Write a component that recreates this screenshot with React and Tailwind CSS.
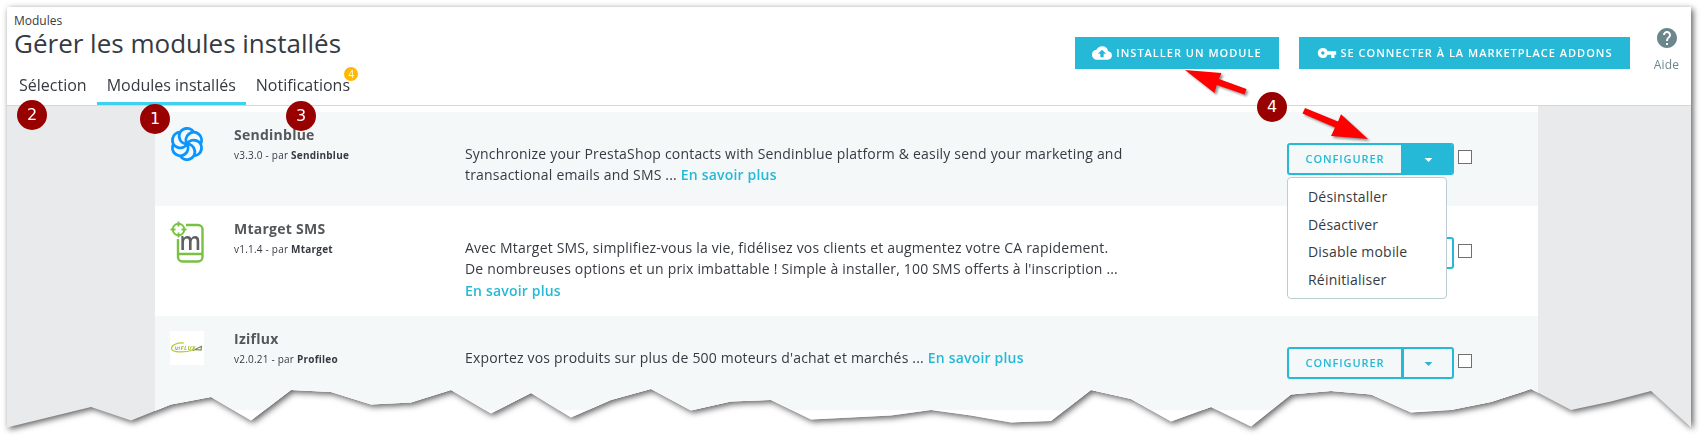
import { useState } from "react";
import { MdArrowDropDown, MdCloudUpload, MdHelp, MdVpnKey } from "react-icons/md";

const tabs = [
  { id: "selection", label: "Sélection" },
  { id: "installed", label: "Modules installés" },
  { id: "notifications", label: "Notifications", count: 4 },
];

const actions = ["Désinstaller", "Désactiver", "Disable mobile", "Réinitialiser"];

// torn bottom edge, from right to left
const tear = [
  [1684, 421], [1644, 384.5], [1604, 395], [1564, 403.5], [1524, 382.5], [1484, 395.5], [1444, 403.5],
  [1404, 406], [1364, 388], [1324, 384.5], [1284, 388], [1244, 420], [1204, 400.5], [1164, 415],
  [1124, 392.5], [1084, 383.5], [1044, 414.5], [1004, 416], [964, 409], [924, 403.5], [884, 409],
  [804, 413], [764, 393.5], [724, 395], [684, 404], [644, 382.5], [604, 393.5], [564, 411],
  [524, 386.5], [484, 407], [444, 383.5], [404, 396], [364, 398], [324, 385.5], [284, 383.5],
  [244, 414], [204, 390.5], [164, 398], [124, 414], [84, 400.5], [0, 421],
];

const paperShape = `polygon(0 0, 1684px 0, ${tear.map(([x, y]) => `${x}px ${y - 0.5}px`).join(", ")})`;

function SendinblueLogo() {
  return (
    <svg width="34" height="34" viewBox="-17 -17 34 34" fill="none" stroke="#0b96ff" strokeWidth="2.9">
      {[0, 60, 120, 180, 240, 300].map((angle) => (
        <path key={angle} transform={`rotate(${angle})`} d="M6.75 -11.7A7.8 7.8 0 1 0 0 0" />
      ))}
    </svg>
  );
}

function MtargetLogo() {
  return (
    <svg width="34" height="42" viewBox="0 0 34 42" fill="none" stroke="#7ac143" strokeWidth="2.4">
      <path d="M16 4h12a4.500 4.500 0 0 1 4.500 4.500v27.500a4.500 4.500 0 0 1-4.500 4.500H12.500a4.500 4.500 0 0 1-4.500-4.500V18M8 33h24.500" />
      <circle cx="8.500" cy="8.500" r="5.800" strokeWidth="1.900" />
      <path d="M8.500 .5v5M8.500 11.500v5M.5 8.500h5M11.500 8.500h5" strokeWidth="1.900" />
      <text x="9.500" y="29" textLength="21.500" lengthAdjust="spacingAndGlyphs" fill="#5d6062" stroke="none" className="font-['Open_Sans',sans-serif] text-[26px] font-semibold">
        m
      </text>
    </svg>
  );
}

function IzifluxLogo() {
  return (
    <svg width="34" height="34" viewBox="0 0 34 34" fill="none" className="bg-white">
      <path d="M14 12C7 11.500 1.500 14 1.500 17.500c0 4.500 14 4 22 1.500" stroke="#b5c92f" strokeWidth="1.200" />
      <path d="M23 19.500l9-4.500M25 18.500l6 .5 .5-3.500" stroke="#7d8750" strokeWidth="1.200" />
      <text x="4.500" y="18.500" textLength="5.500" lengthAdjust="spacingAndGlyphs" fill="#666" className="font-['Open_Sans',sans-serif] text-[6px] italic">izi</text>
      <text x="10.500" y="18.500" textLength="15" fill="#a9bf2c" className="font-['Open_Sans',sans-serif] text-[6px] font-bold italic">FLUX</text>
    </svg>
  );
}

const modules = [
  {
    name: "Sendinblue",
    version: "v3.3.0",
    author: "Sendinblue",
    logo: <SendinblueLogo />,
    lines: ["Synchronize your PrestaShop contacts with Sendinblue platform & easily send your marketing and", "transactional emails and SMS ... "],
    row: "h-[94px] bg-[#f4f8f9]",
  },
  {
    name: "Mtarget SMS",
    version: "v1.1.4",
    author: "Mtarget",
    logo: <MtargetLogo />,
    lines: [
      "Avec Mtarget SMS, simplifiez-vous la vie, fidélisez vos clients et augmentez votre CA rapidement.",
      "De nombreuses options et un prix imbattable ! Simple à installer, 100 SMS offerts à l'inscription ...",
      "",
    ],
    row: "h-[110px] bg-white",
  },
  {
    name: "Iziflux",
    version: "v2.0.21",
    author: "Profileo",
    logo: <IzifluxLogo />,
    lines: ["Exportez vos produits sur plus de 500 moteurs d'achat et marchés ... "],
    row: "h-[94px] bg-[#f4f8f9]",
  },
];

function ConfigureButton({ open, covered, onToggle }) {
  return (
    <div className="relative w-[167px]">
      <div className="flex h-8 overflow-hidden rounded-[3px] border-2 border-[#25b9d7] text-[#25b9d7]">
        <button className="w-[112px] text-[11px] font-semibold tracking-[0.9px]">{!covered && "CONFIGURER"}</button>
        <button
          onClick={onToggle}
          className={`flex flex-1 items-center justify-center border-l-[3px] border-[#25b9d7] ${open ? "bg-[#25b9d7] text-white" : ""}`}
        >
          <MdArrowDropDown className="size-[19px]" />
        </button>
      </div>
      {open && (
        <ul className="absolute top-[34px] left-0 z-10 h-[122px] w-40 rounded-[4px] border border-[#bbcdd2] bg-white pt-[5px] pl-5">
          {actions.map((action) => (
            <li key={action} className="h-[27.600px] text-[14px] leading-[27.600px] tracking-[0.200px]">
              {action}
            </li>
          ))}
        </ul>
      )}
    </div>
  );
}

function ModuleRow({ module, open, covered, onToggle }) {
  return (
    <div className={`flex items-start ${module.row}`}>
      <div className="w-[79px] pt-[15px] pl-[15px]">{module.logo}</div>
      <div className="w-[231px] pt-3">
        <h3 className="text-[14px] leading-[21px] font-bold tracking-[0.250px] text-[#54585b]">{module.name}</h3>
        <p className="mt-[2px] text-[10px] leading-4 tracking-[0.220px]">
          {module.version} - par <b>{module.author}</b>
        </p>
      </div>
      <div className="w-[822px] pt-[31px] text-[14px] leading-[21.300px] tracking-[0.190px] whitespace-pre">
        {module.lines.map((line, i) => (
          <p key={i}>
            {line}
            {i === module.lines.length - 1 && <a className="font-semibold text-[#25b9d7]">En savoir plus</a>}
          </p>
        ))}
      </div>
      <div className="flex items-start pt-[31px]">
        <ConfigureButton open={open} covered={covered} onToggle={onToggle} />
        <span className="mt-[7px] ml-1 size-[14px] border border-[#707070] bg-white" />
      </div>
    </div>
  );
}

function Marker({ children, className }) {
  return (
    <span
      className={`absolute flex size-[30px] items-center justify-center rounded-full bg-[#990000] pb-px font-['DejaVu_Sans',sans-serif] text-[16px] text-white ${className}`}
    >
      {children}
    </span>
  );
}

export default function App() {
  const [activeTab, setActiveTab] = useState("installed");
  const [openMenu, setOpenMenu] = useState("Sendinblue");

  return (
    <div className="relative h-[439px] w-[1702px] overflow-hidden bg-white font-['Open_Sans',sans-serif] text-[#363a41]">
      <div className="pt-[7px] pl-[7px] drop-shadow-[2px_2px_3px_rgba(0,0,0,0.65)]">
        <div className="h-[432px] w-[1684px] bg-[#e9eaec]" style={{ clipPath: paperShape }}>
          <header className="flex h-[99px] justify-between border-b border-[#d5d7d9] bg-white">
            <div className="flex flex-col">
              <p className="pt-[5px] pl-[7px] text-[12px] leading-[18px]">Modules</p>
              <h1 className="pl-[7px] text-[26px] leading-[26px]">Gérer les modules installés</h1>
              <nav className="mt-auto flex">
                {tabs.map((tab) => (
                  <button
                    key={tab.id}
                    onClick={() => setActiveTab(tab.id)}
                    className={`relative h-[35px] border-b-[3px] px-[10px] pb-0.5 text-[16px] first:ml-[2px] ${
                      activeTab === tab.id ? "border-[#3ed2f0]" : "border-transparent"
                    }`}
                  >
                    {tab.label}
                    {tab.count && (
                      <span className="absolute top-[-3px] right-[2px] flex size-[14px] items-center justify-center rounded-full bg-[#ffb900] text-[10px] text-white">
                        {tab.count}
                      </span>
                    )}
                  </button>
                ))}
              </nav>
            </div>
            <div className="flex items-start pt-[30px] text-[11px] font-semibold tracking-[1px] text-white">
              <button className="mr-5 flex h-8 w-[204px] items-center justify-center gap-1 bg-[#25b9d7]">
                <MdCloudUpload className="size-5" />
                INSTALLER UN MODULE
              </button>
              <button className="flex h-8 w-[331px] items-center justify-center gap-1 bg-[#25b9d7]">
                <MdVpnKey className="size-5" />
                SE CONNECTER À LA MARKETPLACE ADDONS
              </button>
              <div className="mt-[-11px] flex w-[61px] flex-col items-center pl-[12px] text-[12px] font-normal tracking-[0.200px] text-[#6c868e]">
                <MdHelp className="size-6" />
                <span className="mt-[6px] leading-[18px]">Aide</span>
              </div>
            </div>
          </header>
          <main className="mx-auto ml-[148px] h-[333px] w-[1383px] bg-white pt-[6px]">
            {modules.map((module, i) => (
              <ModuleRow
                key={module.name}
                module={module}
                open={openMenu === module.name}
                covered={i > 0 && openMenu === modules[i - 1].name}
                onToggle={() => setOpenMenu(openMenu === module.name ? null : module.name)}
              />
            ))}
          </main>
        </div>
      </div>

      <Marker className="top-[104px] left-[140px]">1</Marker>
      <Marker className="top-[100px] left-[17px]">2</Marker>
      <Marker className="top-[101px] left-[286px]">3</Marker>
      <Marker className="top-[92px] left-[1257px]">4</Marker>
      <svg
        className="pointer-events-none absolute top-[60px] left-[1170px] drop-shadow-[2px_2px_1px_rgba(0,0,0,0.4)]"
        width="210"
        height="90"
        viewBox="1170 60 210 90"
        fill="#ff0000"
      >
        <path d="M1185 70L1221.500 73L1219 79L1246.500 89L1244.500 94.500L1216.800 85L1214.500 93Z" />
        <path d="M1368 139L1341 114.300L1338 121.500L1305 108L1302.500 113.500L1335 127.500L1331 136Z" />
      </svg>
    </div>
  );
}
